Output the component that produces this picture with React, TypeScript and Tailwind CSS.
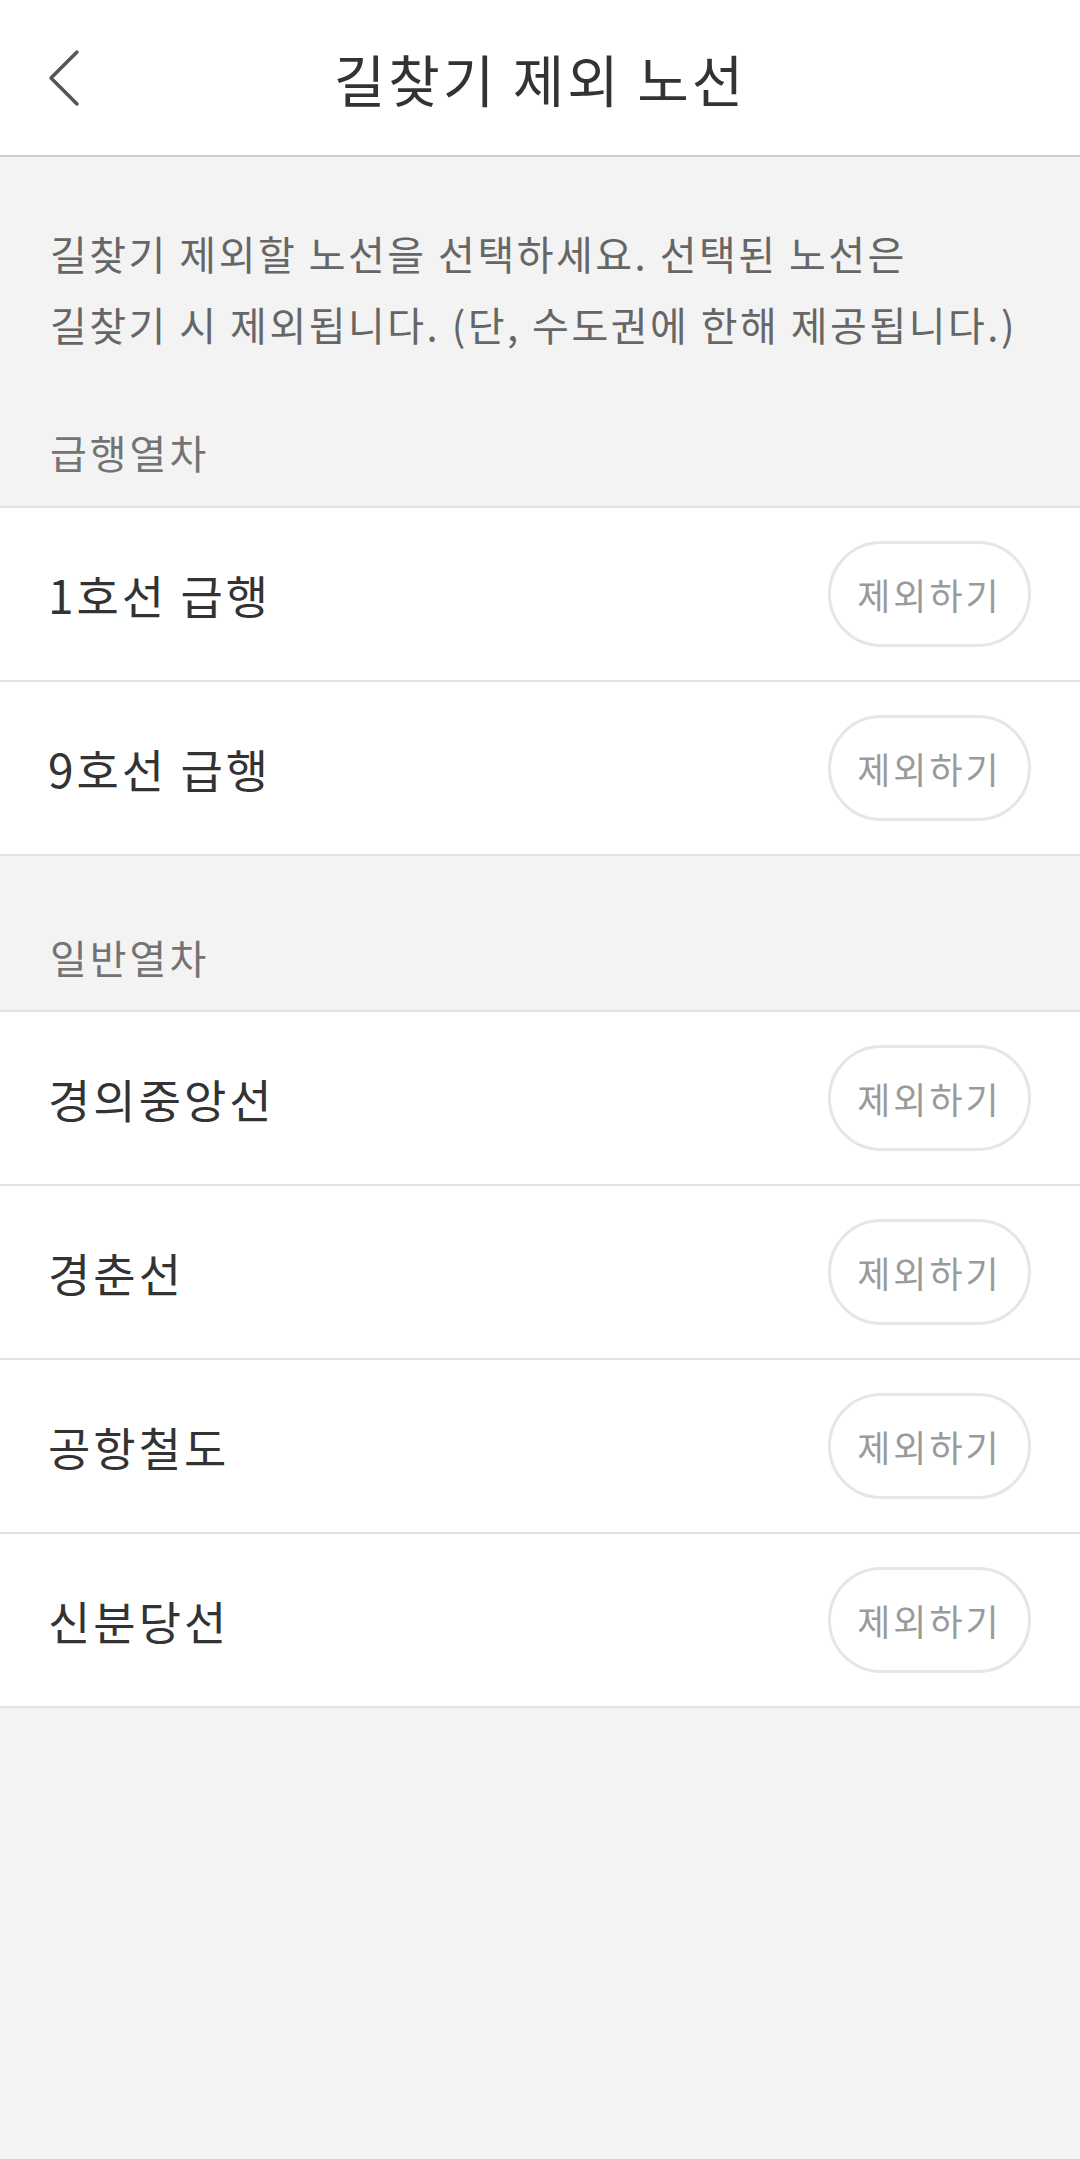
import React from "react";

const font = { fontFamily: '"Noto Sans CJK KR", "Noto Sans", sans-serif' };

function BackIcon() {
  return (
    <svg width="40" height="60" viewBox="0 0 40 60" className="text-[#555]">
      <path d="M30 4 L4 30 L30 56" fill="none" stroke="currentColor" strokeWidth="3.5" strokeLinecap="round" strokeLinejoin="round" />
    </svg>
  );
}

function LineRow({ name }: { name: string }) {
  return (
    <div className="flex h-[174px] items-center justify-between border-b-2 border-[#e2e2e2] bg-white pl-[48px] pr-[49px]">
      <span className="text-[46px] leading-none tracking-[3px] text-[#333]">{name}</span>
      <button className="flex h-[106px] w-[203px] items-center justify-center rounded-full border-[3px] border-[#e6e6e6] bg-white text-[36px] leading-none tracking-[3px] text-[#9a9a9a]">
        제외하기
      </button>
    </div>
  );
}

function SectionTitle({ children, className }: { children: React.ReactNode; className: string }) {
  return (
    <div className={"px-[50px] text-[40px] leading-[50px] tracking-[3px] text-[#737373] " + className}>
      {children}
    </div>
  );
}

export default function App() {
  const express = ["1호선 급행", "9호선 급행"];
  const normal = ["경의중앙선", "경춘선", "공항철도", "신분당선"];
  return (
    <div className="min-h-[2159px] w-[1080px] bg-[#f3f3f3]" style={font}>
      <header className="relative flex h-[157px] items-center justify-center border-b-2 border-[#cfcfcf] bg-white">
        <div className="absolute left-[47px] top-[48px]">
          <BackIcon />
        </div>
        <h1 className="text-[56px] font-normal leading-none tracking-[3px] text-[#333]">길찾기 제외 노선</h1>
      </header>

      <div className="px-[50px] pt-[61px] text-[40px] leading-[71px] tracking-[2.5px] text-[#666]">
        <p>길찾기 제외할 노선을 선택하세요. 선택된 노선은</p>
        <p>길찾기 시 제외됩니다. (단, 수도권에 한해 제공됩니다.)</p>
      </div>
      <SectionTitle className="pb-[29px] pt-[67px]">급행열차</SectionTitle>
      <div className="border-t-2 border-[#e2e2e2]">
        {express.map((n) => (
          <LineRow key={n} name={n} />
        ))}
      </div>

      <SectionTitle className="pb-[28px] pt-[76px]">일반열차</SectionTitle>
      <div className="border-t-2 border-[#e2e2e2]">
        {normal.map((n) => (
          <LineRow key={n} name={n} />
        ))}
      </div>
    </div>
  );
}
